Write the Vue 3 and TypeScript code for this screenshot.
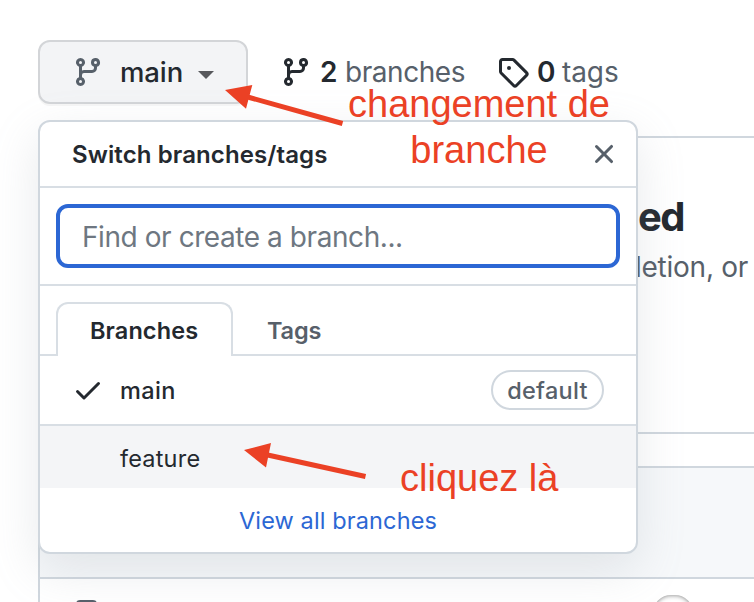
<script setup lang="ts">
import { ref } from 'vue'

interface Branch {
  name: string
  current: boolean
  isDefault: boolean
}

const branches: Branch[] = [
  { name: 'main', current: true, isDefault: true },
  { name: 'feature', current: false, isDefault: false },
]
const query = ref('')

const branchIcon =
  'M11.75 2.5a.75.75 0 100 1.5.75.75 0 000-1.5zm-2.25.75a2.25 2.25 0 113 2.122V6A2.5 2.5 0 0110 8.5H6a1 1 0 00-1 1v1.128a2.251 2.251 0 11-1.5 0V5.372a2.25 2.25 0 111.5 0v1.836A2.492 2.492 0 016 7h4a1 1 0 001-1v-.628A2.25 2.25 0 019.5 3.25zM4.25 12a.75.75 0 100 1.5.75.75 0 000-1.5zM3.5 3.25a.75.75 0 111.5 0 .75.75 0 01-1.5 0z'
const tagIcon =
  'M2.5 7.775V2.75a.25.25 0 01.25-.25h5.025a.25.25 0 01.177.073l6.25 6.25a.25.25 0 010 .354l-5.025 5.025a.25.25 0 01-.354 0l-6.25-6.25a.25.25 0 01-.073-.177zm-1.5 0V2.75C1 1.784 1.784 1 2.75 1h5.025c.464 0 .91.184 1.238.513l6.25 6.25a1.75 1.75 0 010 2.474l-5.026 5.026a1.75 1.75 0 01-2.474 0l-6.25-6.25A1.75 1.75 0 011 7.775zM6 5a1 1 0 100 2 1 1 0 000-2z'
const closeIcon =
  'M3.72 3.72a.75.75 0 011.06 0L8 6.94l3.22-3.22a.75.75 0 111.06 1.06L9.06 8l3.22 3.22a.75.75 0 11-1.06 1.06L8 9.06l-3.22 3.22a.75.75 0 01-1.06-1.06L6.94 8 3.72 4.78a.75.75 0 010-1.06z'
const checkIcon =
  'M13.78 4.22a.75.75 0 010 1.06l-7.25 7.25a.75.75 0 01-1.06 0L2.22 9.28a.75.75 0 011.06-1.06L6 10.94l6.72-6.72a.75.75 0 011.06 0z'
</script>

<template>
  <main class="page">
    <header class="toolbar">
      <button class="branch-button" type="button">
        <svg class="icon" viewBox="0 0 16 16"><path :d="branchIcon" /></svg>
        <span class="branch-label">main</span>
        <span class="caret"></span>
      </button>
      <a class="stat stat-branches">
        <svg class="icon" viewBox="0 0 16 16"><path :d="branchIcon" /></svg>
        <strong>2</strong><span>branches</span>
      </a>
      <a class="stat stat-tags">
        <svg class="icon" viewBox="0 0 16 16"><path :d="tagIcon" /></svg>
        <strong>0</strong><span>tags</span>
      </a>
    </header>

    <section class="notice">
      <h2>ed</h2>
      <p>letion, or</p>
    </section>

    <section class="files">
      <div class="commit-bar"></div>
      <div class="file-row">
        <span class="file-icon"></span>
        <span class="avatar"></span>
      </div>
    </section>

    <div class="menu">
      <div class="menu-header">
        <span class="menu-title">Switch branches/tags</span>
        <svg class="icon" viewBox="0 0 16 16"><path :d="closeIcon" /></svg>
      </div>
      <div class="menu-filter">
        <input v-model="query" type="text" placeholder="Find or create a branch..." />
      </div>
      <div class="tabs">
        <button class="tab tab-active" type="button"><span>Branches</span></button>
        <button class="tab" type="button"><span>Tags</span></button>
      </div>
      <div
        v-for="branch in branches"
        :key="branch.name"
        class="row"
        :class="{ 'row-hover': !branch.current }"
      >
        <svg v-if="branch.current" class="icon" viewBox="0 0 16 16"><path :d="checkIcon" /></svg>
        <span v-else class="icon"></span>
        <span class="row-name" :class="{ 'row-current': branch.current }">{{ branch.name }}</span>
        <span v-if="branch.isDefault" class="badge">default</span>
      </div>
      <a class="menu-footer"><span>View all branches</span></a>
    </div>

    <svg class="arrows" viewBox="0 0 754 602">
      <path class="shaft" d="M246 96.5 342.500 123.500M262 453.800 365.500 476.500" />
      <path class="head" d="M225 90 252.300 85 246 108.800ZM244 450 271 443 266 467.500Z" />
    </svg>
    <p class="note note-change">changement de<br />branche</p>
    <p class="note note-click">cliquez là</p>
  </main>
</template>

<style>
body {
  margin: 0;
  overflow: hidden;
  background: #fff;
}
</style>

<style scoped>
* {
  box-sizing: border-box;
}
.page {
  position: relative;
  width: 754px;
  height: 602px;
  overflow: hidden;
  background: #fff;
  color: #24292f;
  font-family: Inter, 'Liberation Sans', sans-serif;
}
.icon {
  display: block;
  flex: none;
  width: 32px;
  height: 32px;
  fill: currentColor;
  fill-rule: evenodd;
}
button {
  font-family: inherit;
  margin: 0;
}
.toolbar {
  display: flex;
  align-items: center;
  height: 136px;
  padding: 40px 0 32px 38px;
}
.branch-button {
  display: flex;
  align-items: center;
  width: 210px;
  height: 64px;
  padding: 0 32px;
  border: 2px solid #d3d5d8;
  border-radius: 12px;
  background: #f3f4f6;
  box-shadow: 0 2px 0 rgba(27, 31, 36, 0.04);
  color: #57606a;
}
.branch-label {
  width: 78px;
  padding: 0 0 0 16px;
  color: #24292f;
  font-size: 27.500px;
  line-height: 40px;
  font-weight: 550;
  letter-spacing: -0.1px;
  text-align: left;
}
.caret {
  margin: 5px 0 0 16px;
  border: 8px solid transparent;
  border-top-color: #57585c;
  border-bottom-width: 0;
}
.stat {
  display: flex;
  align-items: center;
  font-size: 28px;
  line-height: 40px;
  color: #57606a;
}
.stat .icon {
  color: #24292f;
}
.stat strong {
  width: 25px;
  margin-left: 8px;
  color: #24292f;
  font-weight: 600;
}
.stat-branches {
  width: 217px;
  margin-left: 32px;
}
.stat span {
  letter-spacing: -0.45px;
}
.stat-tags span {
  letter-spacing: -0.1px;
}
.notice {
  width: 800px;
  height: 298px;
  margin-left: 38px;
  padding: 54px 0 0 598px;
  border: 2px solid #d0d7de;
  border-radius: 12px;
}
.notice h2 {
  margin: 0;
  font-size: 40px;
  line-height: 50px;
  font-weight: 700;
  letter-spacing: -1.5px;
}
.notice p {
  margin: 5px 0 0 -3px;
  color: #57606a;
  font-size: 28px;
  line-height: 40px;
  letter-spacing: -0.25px;
  white-space: nowrap;
}
.files {
  width: 800px;
  height: 200px;
  margin: 32px 0 0 38px;
  border: 2px solid #d0d7de;
  border-radius: 12px;
}
.commit-bar {
  height: 111px;
  border-bottom: 2px solid #d0d7de;
  border-radius: 10px 10px 0 0;
  background: #f6f8fa;
}
.file-row {
  display: flex;
  justify-content: space-between;
  width: 653px;
  padding: 16px 0 0 36px;
}
.file-icon {
  width: 21px;
  height: 26px;
  margin-top: 5px;
  border: 3px solid #57606a;
  border-radius: 4px;
}
.avatar {
  width: 40px;
  height: 40px;
  border-radius: 18px;
  background: #fff;
  box-shadow: inset 0 0 5px #777;
}
.menu {
  position: absolute;
  top: 120px;
  left: 38px;
  width: 600px;
  height: 434px;
  overflow: hidden;
  border: 2px solid #d0d7de;
  border-radius: 12px;
  background: #fff;
  box-shadow: 0 16px 48px rgba(140, 149, 159, 0.2);
}
.menu-header {
  display: flex;
  align-items: center;
  justify-content: space-between;
  height: 66px;
  padding: 0 16px 0 32px;
  border-bottom: 2px solid #d8dee4;
  color: #57606a;
}
.menu-title {
  color: #24292f;
  font-size: 24px;
  font-weight: 600;
  letter-spacing: 0.1px;
}
.menu-filter {
  height: 98px;
  padding: 16px;
  border-bottom: 2px solid #d8dee4;
}
.menu-filter input {
  display: block;
  width: 564px;
  height: 64px;
  padding: 1px 22px 0;
  border: 4px solid #2c67d4;
  border-radius: 12px;
  outline: none;
  background: #fff;
  font: 28px Inter, 'Liberation Sans', sans-serif;
  letter-spacing: -0.43px;
}
.menu-filter input::placeholder {
  color: #6e7781;
  opacity: 1;
}
.tabs {
  display: flex;
  height: 70px;
  padding: 16px 16px 0;
  box-shadow: inset 0 -2px #d8dee4;
}
.tab {
  height: 54px;
  padding: 2px 0 0 34px;
  border: 0;
  background: transparent;
  color: #57606a;
  font-size: 23.500px;
  font-weight: 600;
  letter-spacing: -0.2px;
  text-align: left;
}
.tab-active {
  width: 177px;
  padding: 0 0 0 32px;
  border: 2px solid #d8dee4;
  border-bottom: 0;
  border-radius: 12px 12px 0 0;
  background: #fff;
  color: #24292f;
  letter-spacing: 0.1px;
}
.row {
  display: flex;
  align-items: center;
  height: 70px;
  padding: 0 32px;
  border-bottom: 2px solid #d8dee4;
}
.row-hover {
  height: 62px;
  border: 0;
  background: #f4f5f7;
}
.row-name {
  flex: 1;
  padding: 3px 0 0 16px;
  font-size: 23.500px;
  line-height: 36px;
  letter-spacing: 0.2px;
}
.row-current {
  padding-top: 2px;
  font-weight: 500;
  letter-spacing: 0.35px;
}
.badge {
  width: 113px;
  height: 40px;
  border: 2px solid #d0d7de;
  border-radius: 20px;
  color: #57606a;
  font-size: 23.500px;
  line-height: 37px;
  font-weight: 500;
  letter-spacing: 0.3px;
  text-align: center;
}
.menu-footer {
  display: flex;
  align-items: center;
  justify-content: center;
  height: 64px;
  color: #2c67d4;
  font-size: 23.500px;
  letter-spacing: 0.12px;
}
.arrows {
  position: absolute;
  inset: 0;
  width: 754px;
  height: 602px;
}
.shaft {
  fill: none;
  stroke: #eb4125;
  stroke-width: 5;
}
.head {
  fill: #eb4125;
}
.note {
  position: absolute;
  margin: 0;
  color: #eb4125;
  font: 38px/46px 'Liberation Sans', Arial, sans-serif;
  text-align: center;
  white-space: nowrap;
}
.note-change {
  top: 81px;
  left: 348px;
}
.note-click {
  top: 455px;
  left: 400px;
}
</style>
